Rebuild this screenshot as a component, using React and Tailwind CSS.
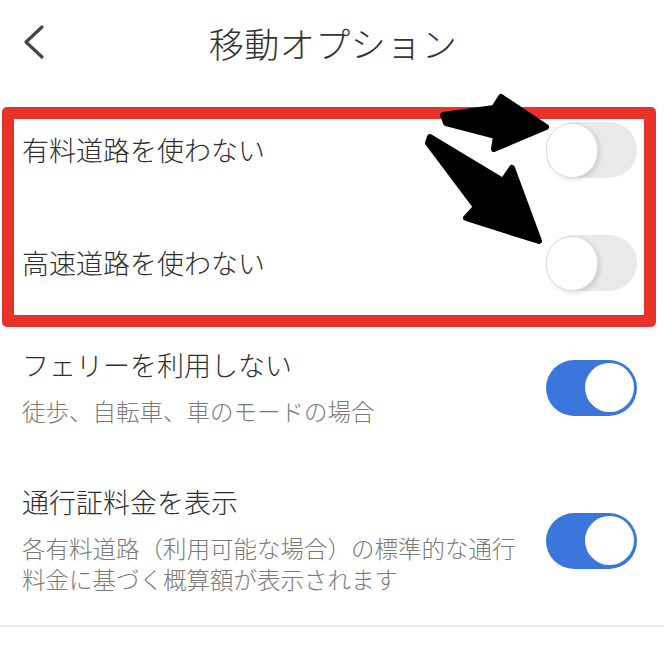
import React from 'react';

const font = { fontFamily: '"Noto Sans CJK JP", "Noto Sans", sans-serif' };

const Toggle = ({ on }) =>
  on ? (
    <div className="flex h-[56px] w-[91px] shrink-0 items-center justify-end rounded-full bg-[#3a76dc] pr-[3px]">
      <div className="h-[49px] w-[49px] rounded-full bg-white" />
    </div>
  ) : (
    <div className="flex h-[56px] w-[91px] shrink-0 items-center rounded-full bg-[#e9e9eb]">
      <div className="h-[55px] w-[52px] rounded-full border border-[#dcdcdc] bg-white shadow-[2px_2px_4px_rgba(0,0,0,0.12)]" />
    </div>
  );

const Arrows = () => (
  <svg className="pointer-events-none absolute left-0 top-0" width="664" height="300" viewBox="0 0 664 300">
    <g fill="#000" stroke="#000" strokeWidth="6" strokeLinejoin="round">
      <polygon points="443,115 494,108 501,97 546,127 494,149 496,136 446,123" />
      <polygon points="430,137 503,181 512,168 539,241 466,218 476,207 428,143" />
    </g>
  </svg>
);

export default function App() {
  return (
    <div className="relative h-[652px] w-[664px] overflow-hidden bg-white font-light text-[#2f2f2f]" style={font}>
      {/* header */}
      <div className="relative flex h-[85px] items-center justify-center">
        <svg className="absolute left-[18px] top-[24px]" width="30" height="36" viewBox="0 0 30 36">
          <path d="M24 3 L8 18 L24 33" fill="none" stroke="#444" strokeWidth="3.2" strokeLinecap="round" strokeLinejoin="round" />
        </svg>
        <h1 className="pl-[2px] text-[35px] font-light leading-none tracking-[0.5px] text-[#333]">移動オプション</h1>
      </div>

      {/* highlighted rows */}
      <div className="ml-[2px] mr-[8px] mt-[22px] rounded-[5px] border-[12px] border-[#e8322a] pb-[24px] pl-[8px] pr-[7px] pt-[3px]">
        <div className="flex items-center justify-between">
          <span className="text-[27px] leading-[32px]">有料道路を使わない</span>
          <Toggle on={false} />
        </div>
        <div className="mt-[57px] flex items-center justify-between">
          <span className="text-[27px] leading-[32px]">高速道路を使わない</span>
          <Toggle on={false} />
        </div>
      </div>

      {/* other options */}
      <div className="pl-[22px] pr-[27px]">
        <div className="mt-[22px] flex items-center justify-between">
          <div>
            <div className="text-[27px] leading-[32px]">フェリーを利用しない</div>
            <div className="mt-[15px] text-[23.5px] leading-[30px] text-[#7a7a7a]">徒歩、自転車、車のモードの場合</div>
          </div>
          <Toggle on />
        </div>
        <div className="mt-[60px] flex items-center justify-between">
          <div>
            <div className="text-[27px] leading-[32px]">通行証料金を表示</div>
            <div className="mt-[15px] text-[23.5px] leading-[31px] text-[#7a7a7a]">
              各有料道路（利用可能な場合）の標準的な通行
              <br />
              料金に基づく概算額が表示されます
            </div>
          </div>
          <Toggle on />
        </div>
      </div>
      <div className="mt-[30px] h-[2px] bg-[#e6e6e6]" />

      <Arrows />
    </div>
  );
}
